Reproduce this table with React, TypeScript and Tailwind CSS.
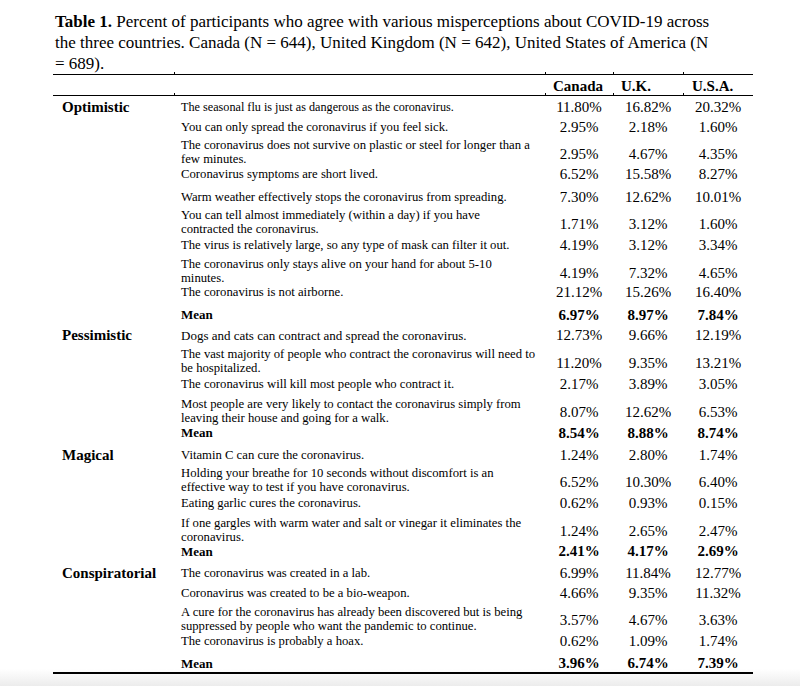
type Row = {
  label?: string;
  lines: string[];
  values: [string, string, string];
  mean?: boolean;
  h: string;
  size?: string;
};

const rows: Row[] = [
  { label: "Optimistic", lines: ["The seasonal flu is just as dangerous as the coronavirus."], values: ["11.80%", "16.82%", "20.32%"], h: "h-[19.5px]", size: "text-[12.2px]" },
  { lines: ["You can only spread the coronavirus if you feel sick."], values: ["2.95%", "2.18%", "1.60%"], h: "h-[22.5px]" },
  { lines: ["The coronavirus does not survive on plastic or steel for longer than a", "few minutes."], values: ["2.95%", "4.67%", "4.35%"], h: "h-[25px]" },
  { lines: ["Coronavirus symptoms are short lived."], values: ["6.52%", "15.58%", "8.27%"], h: "h-[22.5px]" },
  { lines: ["Warm weather effectively stops the coronavirus from spreading."], values: ["7.30%", "12.62%", "10.01%"], h: "h-[22.5px]" },
  { lines: ["You can tell almost immediately (within a day) if you have", "contracted the coronavirus."], values: ["1.71%", "3.12%", "1.60%"], h: "h-[24.5px]" },
  { lines: ["The virus is relatively large, so any type of mask can filter it out."], values: ["4.19%", "3.12%", "3.34%"], h: "h-[24.5px]" },
  { lines: ["The coronavirus only stays alive on your hand for about 5-10", "minutes."], values: ["4.19%", "7.32%", "4.65%"], h: "h-[24px]" },
  { lines: ["The coronavirus is not airborne."], values: ["21.12%", "15.26%", "16.40%"], h: "h-[22.5px]" },
  { lines: ["Mean"], values: ["6.97%", "8.97%", "7.84%"], mean: true, h: "h-[20.5px]" },
  { label: "Pessimistic", lines: ["Dogs and cats can contract and spread the coronavirus."], values: ["12.73%", "9.66%", "12.19%"], h: "h-[23px]", size: "text-[13px]" },
  { lines: ["The vast majority of people who contract the coronavirus will need to", "be hospitalized."], values: ["11.20%", "9.35%", "13.21%"], h: "h-[25px]" },
  { lines: ["The coronavirus will kill most people who contract it."], values: ["2.17%", "3.89%", "3.05%"], h: "h-[24.5px]" },
  { lines: ["Most people are very likely to contact the coronavirus simply from", "leaving their house and going for a walk."], values: ["8.07%", "12.62%", "6.53%"], h: "h-[25px]" },
  { lines: ["Mean"], values: ["8.54%", "8.88%", "8.74%"], mean: true, h: "h-[22.5px]" },
  { label: "Magical", lines: ["Vitamin C can cure the coronavirus."], values: ["1.24%", "2.80%", "1.74%"], h: "h-[22px]" },
  { lines: ["Holding your breathe for 10 seconds without discomfort is an", "effective way to test if you have coronavirus."], values: ["6.52%", "10.30%", "6.40%"], h: "h-[24.5px]" },
  { lines: ["Eating garlic cures the coronavirus."], values: ["0.62%", "0.93%", "0.15%"], h: "h-[25px]" },
  { lines: ["If one gargles with warm water and salt or vinegar it eliminates the", "coronavirus."], values: ["1.24%", "2.65%", "2.47%"], h: "h-[24.5px]" },
  { lines: ["Mean"], values: ["2.41%", "4.17%", "2.69%"], mean: true, h: "h-[22px]" },
  { label: "Conspiratorial", lines: ["The coronavirus was created in a lab."], values: ["6.99%", "11.84%", "12.77%"], h: "h-[20px]" },
  { lines: ["Coronavirus was created to be a bio-weapon."], values: ["4.66%", "9.35%", "11.32%"], h: "h-[22.5px]" },
  { lines: ["A cure for the coronavirus has already been discovered but is being", "suppressed by people who want the pandemic to continue."], values: ["3.57%", "4.67%", "3.63%"], h: "h-[25.5px]" },
  { lines: ["The coronavirus is probably a hoax."], values: ["0.62%", "1.09%", "1.74%"], h: "h-[22px]" },
  { lines: ["Mean"], values: ["3.96%", "6.74%", "7.39%"], mean: true, h: "h-[19.5px]" },
];

const cols = "grid grid-cols-[121px_371px_68px_70px_70px]";

const Ticks = () => (
  <div className={`${cols} h-[2px]`}>
    <div />
    <div className="border-l border-black" />
    <div className="border-l border-black" />
    <div className="border-l border-black" />
    <div className="border-l border-black" />
  </div>
);

export default function App() {
  return (
    <div
      className="w-[800px] min-h-[686px] bg-[linear-gradient(to_bottom,#ffffff_97.5%,#ececec)] text-black"
      style={{ fontFamily: '"Liberation Serif", "Times New Roman", serif' }}
    >
      <p className="pl-[55px] pt-[11px] h-[74px] text-[17px] leading-[21px] whitespace-nowrap">
        <span className="font-bold">Table 1.</span> Percent of participants who agree with various misperceptions about COVID-19 across
        <br />
        the three countries. Canada (N = 644), United Kingdom (N = 642), United States of America (N
        <br />
        = 689).
      </p>

      <div className="ml-[53px] w-[700px] -mt-[2px]">
        <Ticks />
        <div className="border-t border-b border-black">
          <div className={`${cols} h-[18px] items-center text-[15px] font-bold`}>
            <div />
            <div />
            <div className="pl-[8px]">Canada</div>
            <div className="pl-[8px]">U.K.</div>
            <div className="pl-[9px]">U.S.A.</div>
          </div>
          <Ticks />
        </div>

        <div className="flex flex-col border-b-2 border-black">
          {rows.map((r, i) => (
            <div key={i} className={`${cols} ${r.h} shrink-0 items-center`}>
              <div className="pl-[9px] text-[15px] font-bold whitespace-nowrap">{r.label}</div>
              <div
                className={`pl-[7px] whitespace-nowrap ${
                  r.mean
                    ? "text-[13px] font-bold leading-[15px]"
                    : `${r.size ?? "text-[12.7px]"} leading-[14px]`
                } ${r.lines.length > 1 ? "pb-[4px]" : ""}`}
              >
                {r.lines.map((l, j) => (
                  <div key={j}>{l}</div>
                ))}
              </div>
              {r.values.map((v, j) => (
                <div key={j} className={`text-center text-[15px] ${r.mean ? "font-bold" : ""}`}>
                  {v}
                </div>
              ))}
            </div>
          ))}
        </div>
      </div>
    </div>
  );
}
